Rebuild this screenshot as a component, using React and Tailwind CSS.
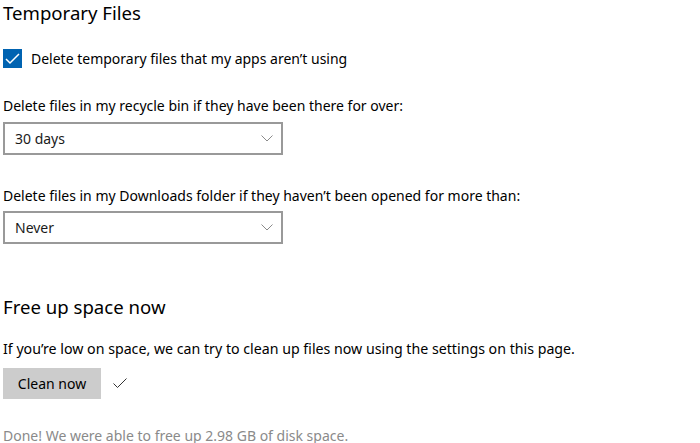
import React from 'react';

function Dropdown({ value }) {
  return (
    <div className="flex h-[33px] w-[280px] items-center justify-between border-2 border-[#999999] bg-white pl-[10px] pr-[8px]">
      <span className="text-[14px] text-[#1a1a1a]">{value}</span>
      <svg width="12" height="7" viewBox="0 0 12 7" fill="none">
        <path d="M0.5 0.5 L6 6 L11.5 0.5" stroke="#8a8a8a" strokeWidth="1" />
      </svg>
    </div>
  );
}

export default function App() {
  return (
    <div className="h-[443px] w-[700px] overflow-hidden bg-white pl-[3px] font-['Segoe_UI','Noto_Sans',sans-serif] text-[#000]">
      <h2 className="text-[18.6px] leading-[26px]">Temporary Files</h2>

      <label className="mt-[22px] flex items-center gap-[9px]">
        <span className="flex h-[19px] w-[19px] items-center justify-center bg-[#0063b1]">
          <svg width="15" height="12" viewBox="0 0 15 12" fill="none">
            <path d="M1 6 L5 10 L14 1" stroke="white" strokeWidth="1.5" />
          </svg>
        </span>
        <span className="text-[14px]">Delete temporary files that my apps aren’t using</span>
      </label>

      <p className="mt-[27px] text-[14px] leading-[20px]">Delete files in my recycle bin if they have been there for over:</p>
      <div className="mt-[6px]">
        <Dropdown value="30 days" />
      </div>

      <p className="mt-[31px] text-[14px] leading-[20px]">Delete files in my Downloads folder if they haven’t been opened for more than:</p>
      <div className="mt-[5px]">
        <Dropdown value="Never" />
      </div>

      <h2 className="mt-[50px] text-[18.6px] leading-[26px]">Free up space now</h2>

      <p className="mt-[19px] text-[14.2px] leading-[20px]">If you’re low on space, we can try to clean up files now using the settings on this page.</p>

      <div className="mt-[9px] flex items-center gap-[12px]">
        <button className="h-[31px] w-[98px] bg-[#cccccc] text-[14px] text-[#000]">Clean now</button>
        <svg width="14" height="11" viewBox="0 0 14 11" fill="none">
          <path d="M0.5 5.5 L4.5 9.5 L13.5 0.5" stroke="#333" strokeWidth="1" />
        </svg>
      </div>

      <p className="mt-[27px] text-[14px] leading-[20px] text-[#8a8a8a]">Done! We were able to free up 2.98 GB of disk space.</p>
    </div>
  );
}
